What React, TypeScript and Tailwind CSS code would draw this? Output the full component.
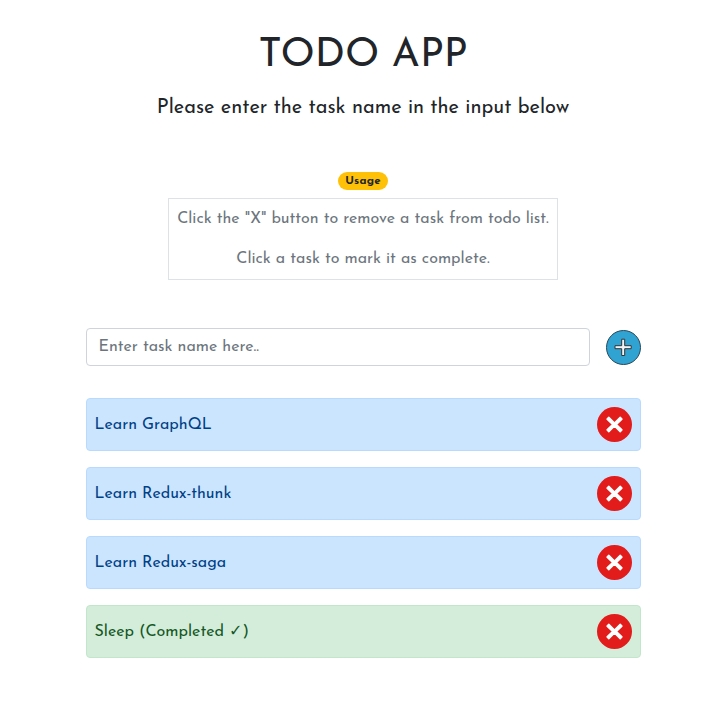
type Task = { name: string; done: boolean };

const tasks: Task[] = [
  { name: 'Learn GraphQL', done: false },
  { name: 'Learn Redux-thunk', done: false },
  { name: 'Learn Redux-saga', done: false },
  { name: 'Sleep (Completed ✓)', done: true },
];

function AddIcon() {
  return (
    <svg width="35" height="35" viewBox="0 0 35 35" className="block">
      <circle cx="17.5" cy="17.5" r="17" fill="#30a3d3" stroke="#29495a" strokeWidth="1" />
      <path d="M15.700 9.200h3v6.500h6.500v3h-6.500v6.800h-3v-6.800H9v-3h6.700z" fill="#f4f4f4" stroke="#333" strokeWidth="1" />
    </svg>
  );
}

function RemoveIcon() {
  return (
    <svg width="35" height="35" viewBox="0 0 35 35" className="block">
      <circle cx="17.5" cy="17.5" r="17.5" fill="#e21b1b" />
      <path
        d="M11.800 10.400L17.500 16l5.700-5.600 1.700 1.700-5.500 5.400 5.500 5.400-1.700 1.700-5.700-5.600-5.700 5.600-1.700-1.700 5.500-5.400-5.500-5.400z"
        fill="#fff"
        stroke="#fff"
        strokeWidth="1.500"
        strokeLinejoin="round"
      />
    </svg>
  );
}

export default function App() {
  return (
    <main className="h-[710px] w-[728px] overflow-hidden bg-white pl-[85.5px] pt-8 font-['Josefin_Sans',Lato,'DejaVu_Sans',sans-serif] text-base text-[#212529]">
      <div className="w-[555px]">
        <header className="flex flex-col items-center whitespace-nowrap">
          <h1 className="text-[40px] leading-[48px]">TODO APP</h1>
          <h2 className="mt-4 text-xl leading-6">Please enter the task name in the input below</h2>
        </header>
        <section className="mt-[52px] flex flex-col items-center whitespace-nowrap">
          <span className="flex h-[18px] w-[50px] items-center justify-center rounded-full bg-[#ffc107] pt-px text-[11.5px] font-bold leading-none tracking-[0.2px]">Usage</span>
          <div className="mt-2 flex h-[82px] w-[390px] flex-col items-center gap-4 border border-[#dee2e6] pt-2 text-[#6c757d]">
            <p className="leading-6">Click the "X" button to remove a task from todo list.</p>
            <p className="leading-6">Click a task to mark it as complete.</p>
          </div>
        </section>
        <form className="mt-12 flex items-center gap-4" onSubmit={(e) => e.preventDefault()}>
          <input
            aria-label="Task name"
            placeholder="Enter task name here.."
            className="h-[38px] w-[504px] rounded border border-[#ced4da] px-3 outline-none placeholder:text-[#6c757d]"
          />
          <button type="submit" aria-label="Add task"><AddIcon /></button>
        </form>
        <ul className="mt-8 flex flex-col gap-4">
          {tasks.map((task) => (
            <li
              key={task.name}
              className={`flex h-[53px] items-center justify-between rounded border px-2 ${
                task.done ? 'border-[#c3e6cb] bg-[#d4edda] text-[#155724]' : 'border-[#b8daff] bg-[#cce5ff] text-[#004085]'
              }`}
            >
              <span className="whitespace-nowrap">{task.name}</span>
              <button type="button" aria-label="Remove task"><RemoveIcon /></button>
            </li>
          ))}
        </ul>
      </div>
    </main>
  );
}
